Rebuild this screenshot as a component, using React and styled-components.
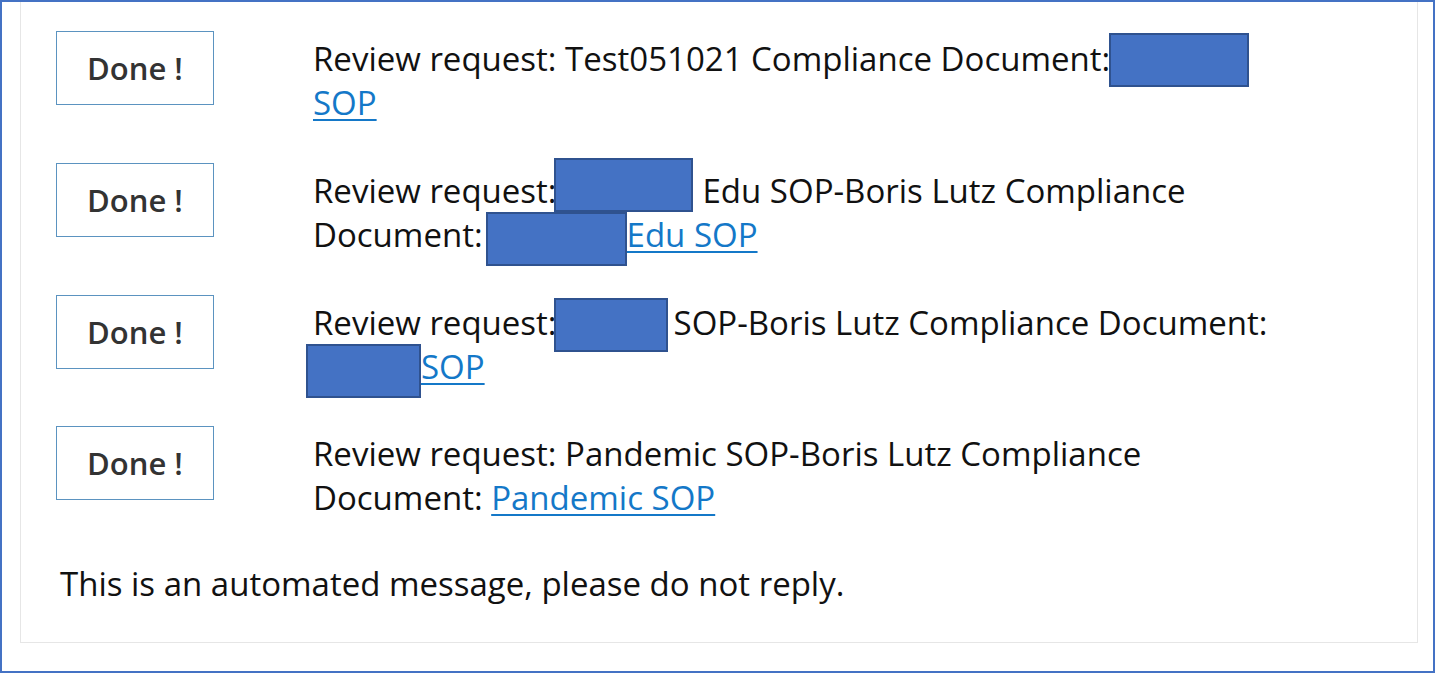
import React from "react";
import styled, { createGlobalStyle } from "styled-components";

const GlobalStyle = createGlobalStyle`
  html, body {
    margin: 0;
    padding: 0;
    background: #ffffff;
  }
  body {
    font-family: "Open Sans", "Noto Sans", sans-serif;
  }
`;

const Frame = styled.div`
  width: 1435px;
  height: 673px;
  box-sizing: border-box;
  border: 2px solid #4472c4;
  padding: 0 15px 0 18px;
  overflow: hidden;
`;

const Card = styled.div`
  height: 641px;
  box-sizing: border-box;
  border: 1px solid #e6e6e6;
  border-top: none;
  padding: 29px 0 0 35px;
`;

const List = styled.div`
  display: flex;
  flex-direction: column;
  gap: 37.5px;
`;

const Row = styled.div`
  display: flex;
  align-items: flex-start;
  gap: 99px;
`;

const DoneButton = styled.button`
  flex: none;
  width: 158px;
  height: 74px;
  box-sizing: border-box;
  background: #ffffff;
  border: 1px solid #5b93c0;
  color: #333333;
  font-family: "Open Sans", "Noto Sans", sans-serif;
  font-size: 31px;
  font-weight: 600;
  padding: 0;
  cursor: pointer;
`;

const Message = styled.div`
  font-size: 33px;
  line-height: 44px;
  color: #111111;
  margin-top: 6px;
  white-space: nowrap;
`;

const Link = styled.a`
  color: #1478c8;
  text-decoration: underline;
  text-underline-offset: 4px;
  text-decoration-thickness: 2px;
`;

const Redact = styled.span`
  display: inline-block;
  width: ${({ w }) => w}px;
  height: 54px;
  box-sizing: border-box;
  background: #4472c4;
  border: 2px solid #2f528f;
  vertical-align: middle;
  margin: -8px ${({ mr }) => mr || 0}px -8px ${({ ml }) => ml || 0}px;
  transform: translateY(${({ dy }) => dy || 0}px);
`;

const Footer = styled.p`
  margin: 42px 0 0 4px;
  font-size: 33px;
  line-height: 44px;
  color: #111111;
`;

const App = () => (
  <>
    <GlobalStyle />
    <Frame>
      <Card>
        <List>
          <Row>
            <DoneButton>Done !</DoneButton>
            <Message>
              Review request: Test051021 Compliance Document:
              <Redact w={140} ml={-1} dy={-2} />
              <br />
              <Link href="#">SOP</Link>
            </Message>
          </Row>
          <Row>
            <DoneButton>Done !</DoneButton>
            <Message>
              Review request:
              <Redact w={139} ml={-3} mr={10} dy={-9} />
              Edu SOP-Boris Lutz Compliance
              <br />
              Document:
              <Redact w={141} ml={3} dy={1} />
              <Link href="#">Edu SOP</Link>
            </Message>
          </Row>
          <Row>
            <DoneButton>Done !</DoneButton>
            <Message>
              Review request:
              <Redact w={114} ml={-3} mr={6} dy={-1} />
              SOP-Boris Lutz Compliance Document:
              <br />
              <Redact w={115} ml={-7} dy={1} />
              <Link href="#">SOP</Link>
            </Message>
          </Row>
          <Row>
            <DoneButton>Done !</DoneButton>
            <Message>
              Review request: Pandemic SOP-Boris Lutz Compliance
              <br />
              Document: <Link href="#">Pandemic SOP</Link>
            </Message>
          </Row>
        </List>
        <Footer>This is an automated message, please do not reply.</Footer>
      </Card>
    </Frame>
  </>
);

export default App;
